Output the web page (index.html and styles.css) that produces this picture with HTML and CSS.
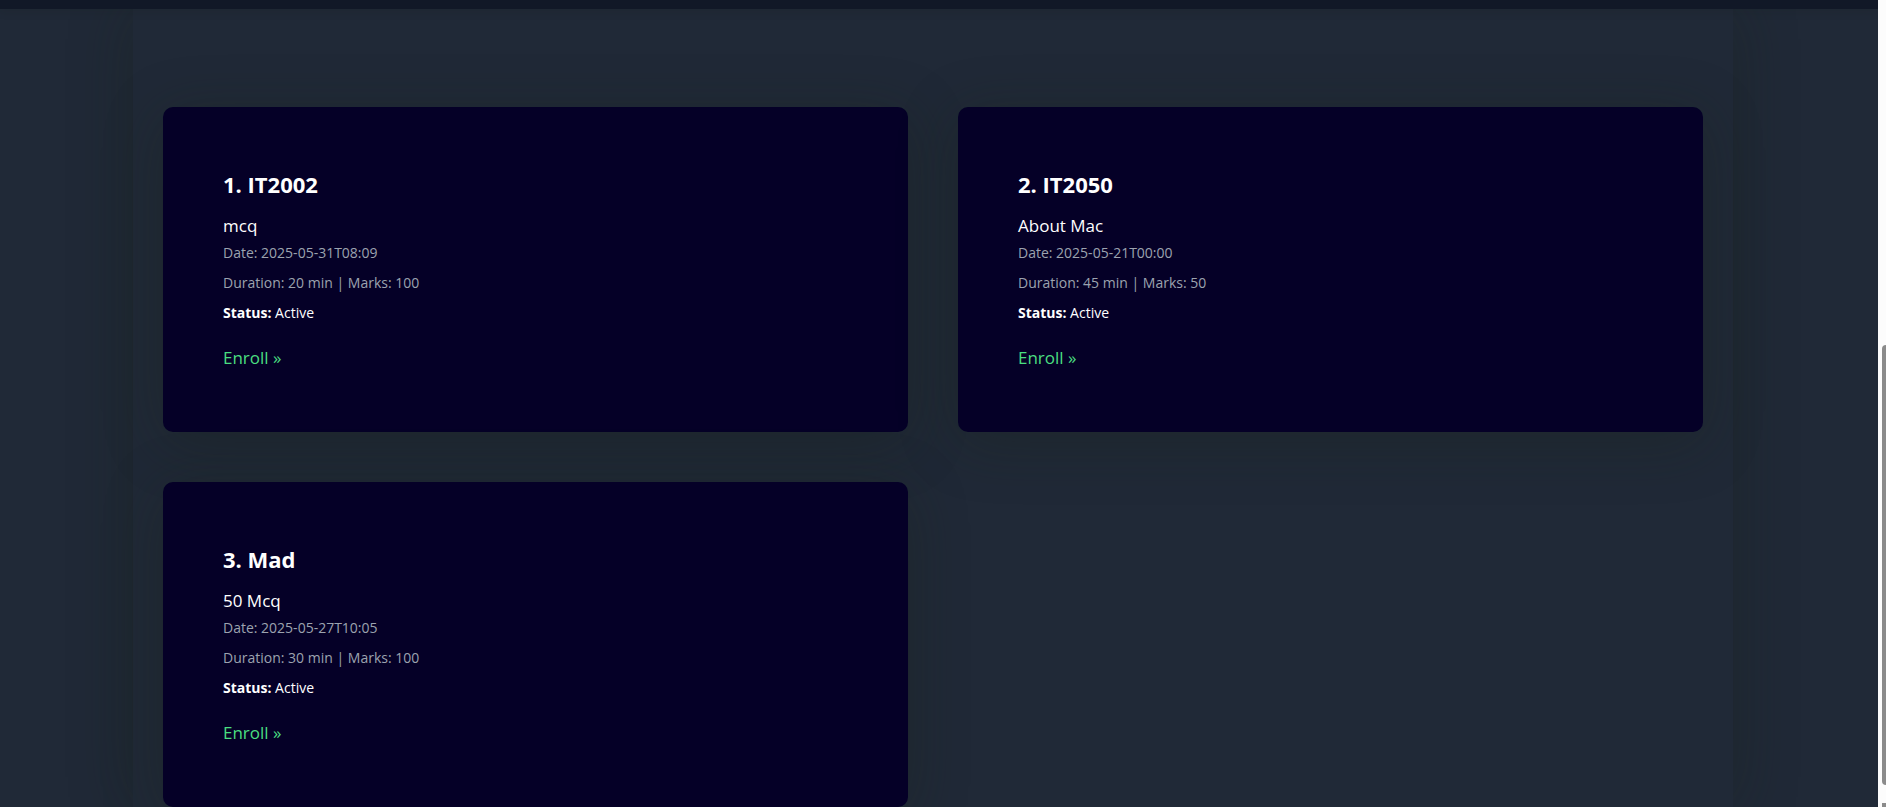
FILE: index.html
```html
<!DOCTYPE html>
<html lang="en">
<head>
<meta charset="utf-8">
<title>Exams</title>
<link rel="stylesheet" href="styles.css">
</head>
<body>
<div class="shell">
  <div class="page">
    <header class="topbar"></header>
    <main class="content">
      <section class="exams">
        <article class="card">
          <h2 class="card-title">1. IT2002</h2>
          <p class="card-name">mcq</p>
          <p class="card-meta">Date: 2025-05-31T08:09</p>
          <p class="card-meta">Duration: 20 min | Marks: 100</p>
          <p class="card-status"><strong>Status:</strong> Active</p>
          <a class="card-link" href="#">Enroll »</a>
        </article>
        <article class="card">
          <h2 class="card-title">2. IT2050</h2>
          <p class="card-name">About Mac</p>
          <p class="card-meta">Date: 2025-05-21T00:00</p>
          <p class="card-meta">Duration: 45 min | Marks: 50</p>
          <p class="card-status"><strong>Status:</strong> Active</p>
          <a class="card-link" href="#">Enroll »</a>
        </article>
        <article class="card">
          <h2 class="card-title">3. Mad</h2>
          <p class="card-name">50 Mcq</p>
          <p class="card-meta">Date: 2025-05-27T10:05</p>
          <p class="card-meta">Duration: 30 min | Marks: 100</p>
          <p class="card-status"><strong>Status:</strong> Active</p>
          <a class="card-link" href="#">Enroll »</a>
        </article>
      </section>
    </main>
  </div>
  <div class="scrollbar" aria-hidden="true">
    <div class="scroll-thumb"></div>
    <div class="scroll-end"></div>
  </div>
</div>
</body>
</html>
```
FILE: styles.css
```css
* { box-sizing: border-box; }

body {
  margin: 0;
  background: #202937;
  color: #fff;
  font-family: "Open Sans", "Noto Sans", sans-serif;
}

.shell {
  display: flex;
  height: 100vh;
  overflow: hidden;
}

.page {
  flex: 1;
  display: flex;
  flex-direction: column;
  min-width: 0;
  overflow: hidden;
}

.topbar {
  position: relative;
  flex: none;
  height: 9px;
  background: #111827;
  box-shadow: 0 2px 10px rgba(20, 30, 20, 0.15);
}

.content {
  flex: 1;
  display: flex;
  padding: 0 145px 0 133px;
}

.exams {
  flex: 1;
  display: grid;
  grid-template-columns: 1fr 1fr;
  align-content: start;
  gap: 50px;
  padding: 98px 30px 0;
  background: #202937;
  box-shadow: 0 0 60px rgba(22, 34, 20, 0.3);
}

.card {
  display: flex;
  flex-direction: column;
  align-items: flex-start;
  padding: 60px;
  border-radius: 10px;
  background: #050027;
  box-shadow: 0 10px 60px rgba(22, 34, 20, 0.3);
}

.card-title {
  margin: 0 0 13px;
  font-size: 22px;
  line-height: 34px;
}

.card-name {
  margin: 0;
  font-size: 17px;
  line-height: 24px;
}

.card-meta,
.card-status {
  margin: 0;
  font-size: 14px;
  line-height: 30px;
}

.card-meta { color: #9ca3af; }

.card-link {
  margin-top: 16px;
  color: #4ade80;
  font-size: 17px;
  line-height: 28px;
  text-decoration: none;
}

.scrollbar {
  flex: none;
  display: flex;
  flex-direction: column;
  width: 8px;
  padding: 345px 0 0 4px;
  background: #fcfcfc;
}

.scroll-thumb {
  flex: 1;
  border-radius: 4px 0 0 4px;
  background: #8b8b8b;
}

.scroll-end {
  height: 4px;
  margin-top: 18px;
  background: #8b8b8b;
}
```
